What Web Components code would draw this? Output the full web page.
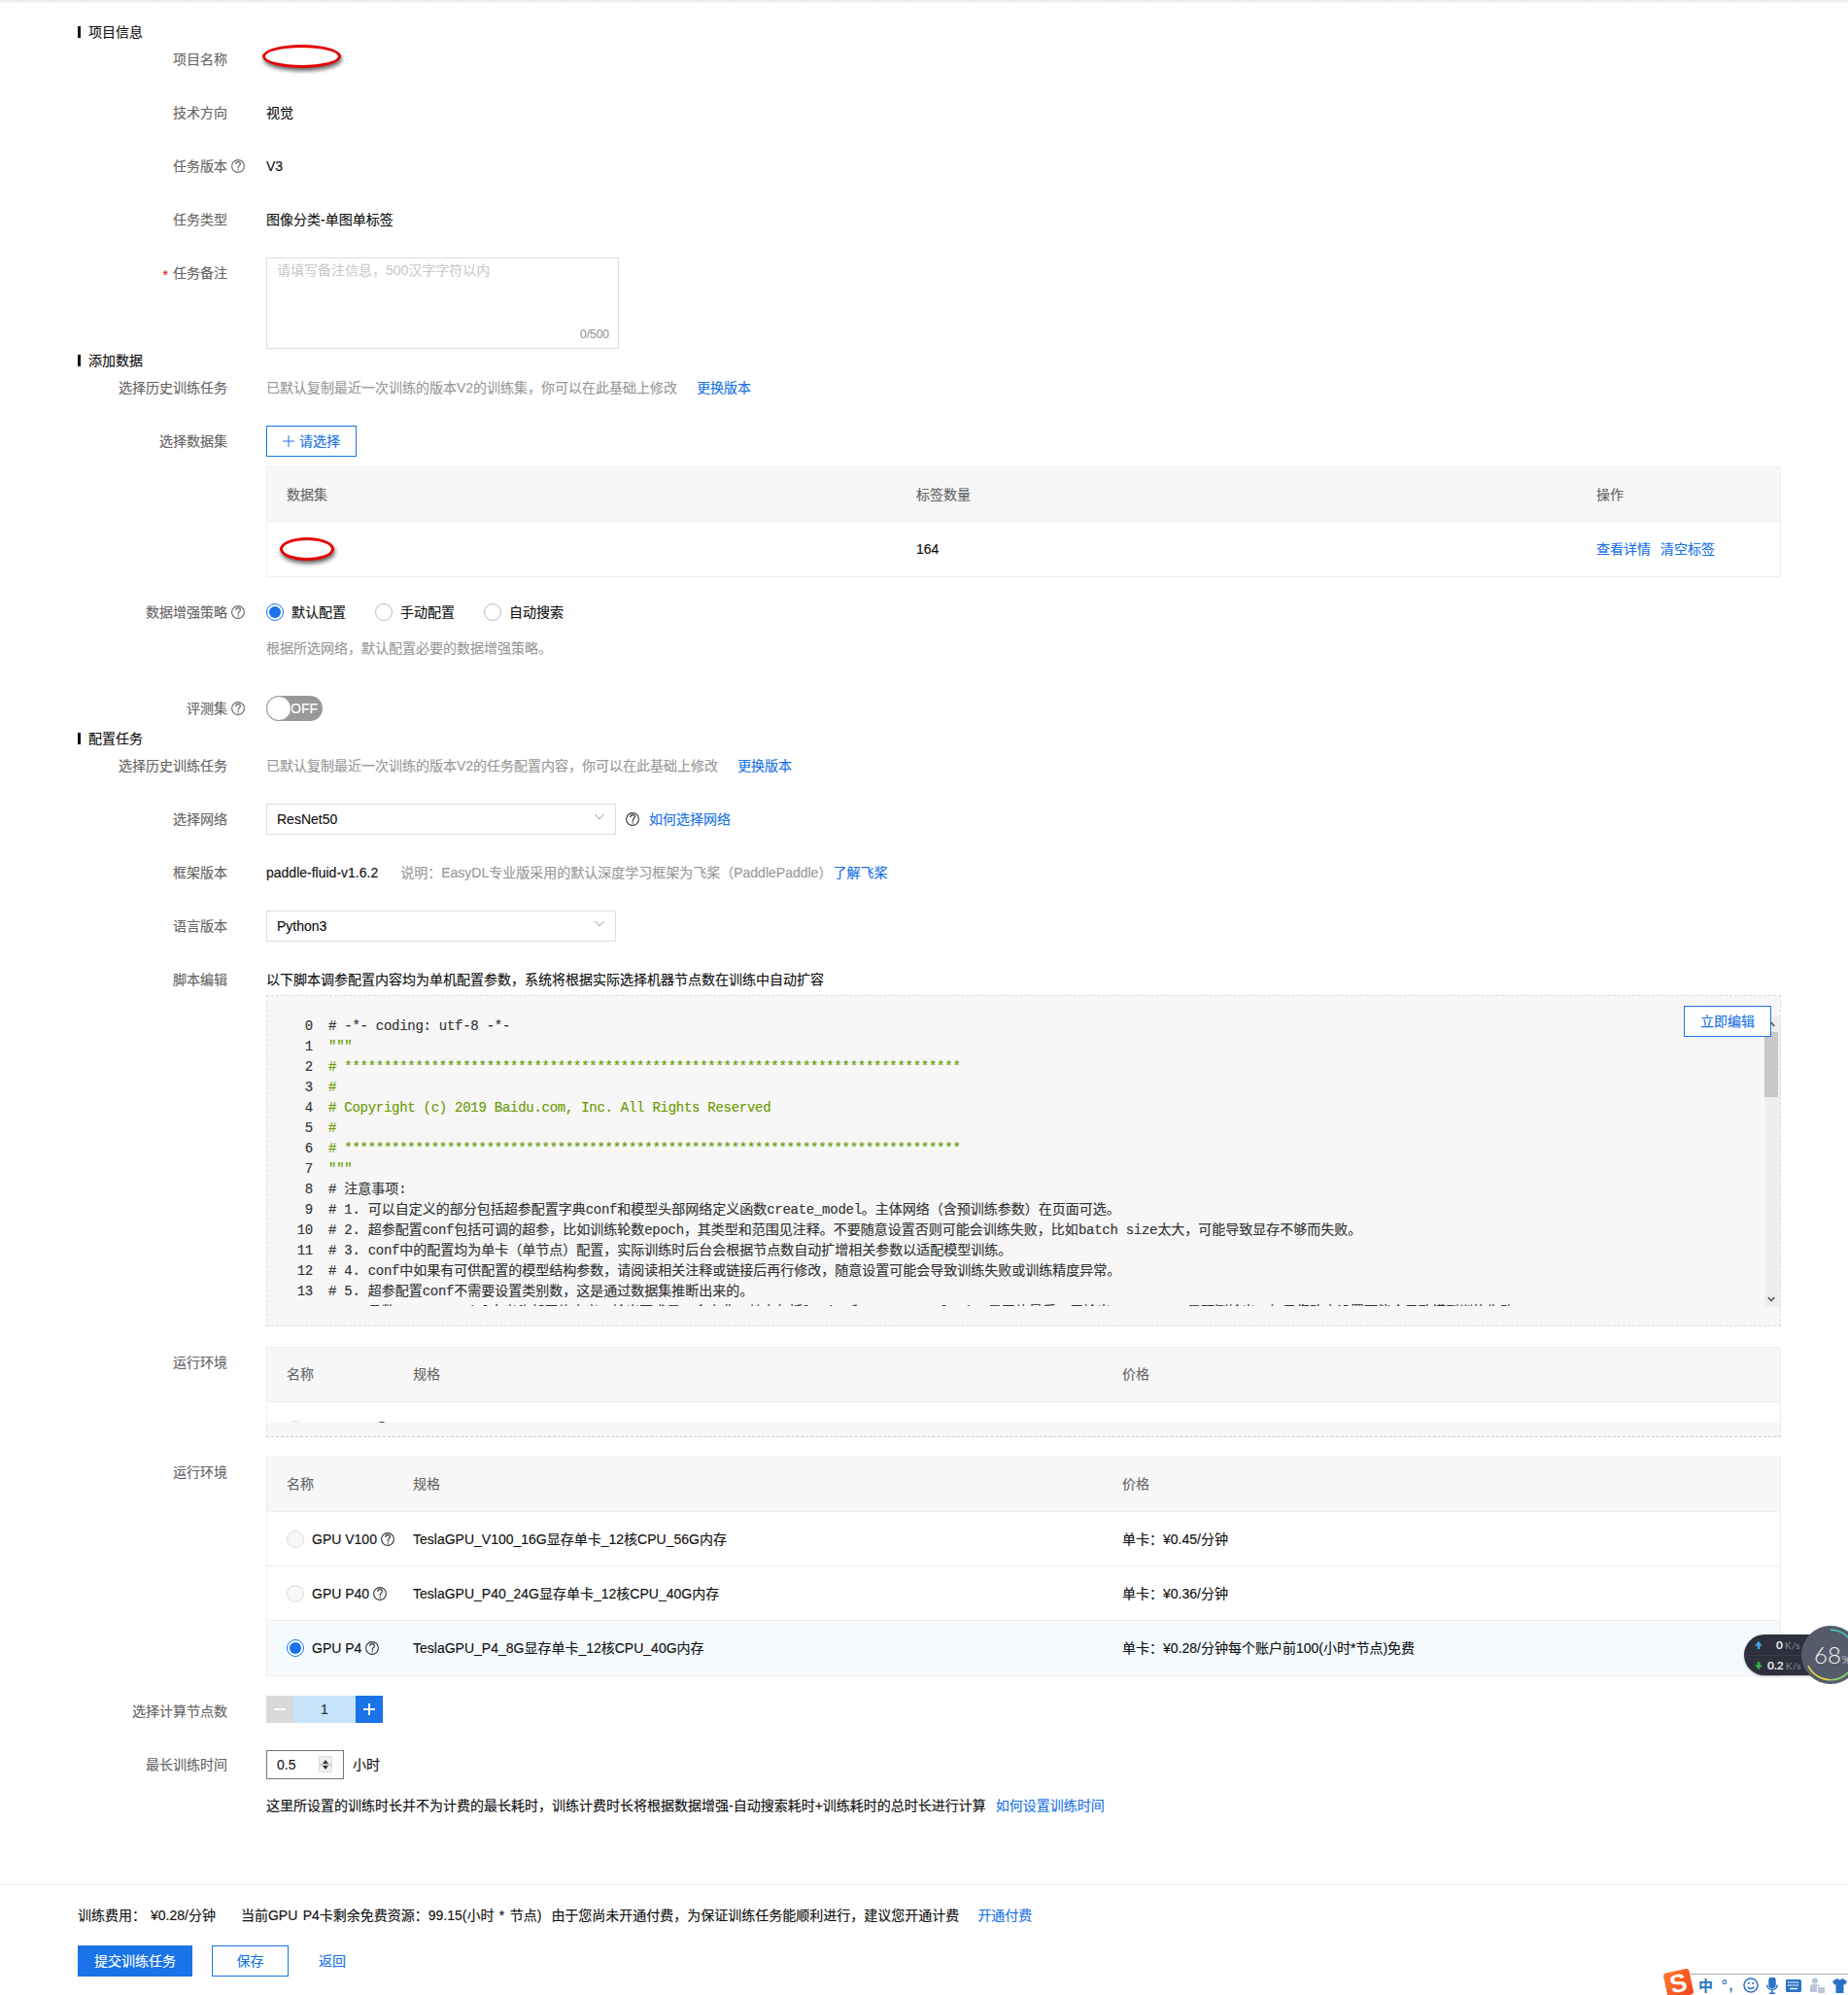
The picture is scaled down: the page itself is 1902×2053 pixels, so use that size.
<!DOCTYPE html>
<html lang="zh">
<head>
<meta charset="utf-8">
<title>配置任务</title>
<style>
html,body{margin:0;padding:0;background:#fff;overflow:hidden}
body{font:14px/32px "Liberation Sans","Noto Sans CJK SC",sans-serif;color:#222;-webkit-text-stroke:.15px}
a{color:#1a73e8;text-decoration:none}
.muted{color:#999}
.lnk{color:#1a73e8}
</style>
</head>
<body>
<x-page>
  <x-section>项目信息</x-section>
  <x-row label="项目名称"><x-blot w="81" style="margin:1px 0 0 -4px"></x-blot></x-row>
  <x-row label="技术方向">视觉</x-row>
  <x-row label="任务版本" help>V3</x-row>
  <x-row label="任务类型">图像分类-单图单标签</x-row>
  <x-row label="任务备注" required style="margin-bottom:2px"><x-textarea placeholder="请填写备注信息，500汉字字符以内" count="0/500"></x-textarea></x-row>

  <x-section>添加数据</x-section>
  <x-row label="选择历史训练任务"><span class="muted">已默认复制最近一次训练的版本V2的训练集，你可以在此基础上修改</span><span class="lnk" style="margin-left:20px">更换版本</span></x-row>
  <x-row label="选择数据集" style="margin-bottom:10px"><x-button outline plus w="93">请选择</x-button></x-row>
  <x-row style="margin-bottom:20px">
    <x-table style="--cols:648px 700px 1fr">
      <x-tr head><span>数据集</span><span>标签数量</span><span>操作</span></x-tr>
      <x-tr last><span><x-blot w="56" style="margin-left:-7px"></x-blot></span><span>164</span><span><span class="lnk">查看详情</span><span class="lnk" style="margin-left:10px">清空标签</span></span></x-tr>
    </x-table>
  </x-row>
  <x-row label="数据增强策略" help style="margin-bottom:5px">
    <x-radio checked style="margin-right:30px">默认配置</x-radio><x-radio style="margin-right:30px">手动配置</x-radio><x-radio>自动搜索</x-radio>
  </x-row>
  <x-row style="margin-bottom:30px"><span class="muted">根据所选网络，默认配置必要的数据增强策略。</span></x-row>
  <x-row label="评测集" help style="margin-bottom:5px"><x-toggle></x-toggle></x-row>

  <x-section>配置任务</x-section>
  <x-row label="选择历史训练任务"><span class="muted">已默认复制最近一次训练的版本V2的任务配置内容，你可以在此基础上修改</span><span class="lnk" style="margin-left:20px">更换版本</span></x-row>
  <x-row label="选择网络"><x-select>ResNet50</x-select><x-help style="margin:0 10px;color:#333"></x-help><span class="lnk">如何选择网络</span></x-row>
  <x-row label="框架版本">paddle-fluid-v1.6.2<span class="muted" style="margin-left:23px">说明：EasyDL专业版采用的默认深度学习框架为飞桨（PaddlePaddle）</span><span class="lnk" style="margin-left:1px">了解飞桨</span></x-row>
  <x-row label="语言版本"><x-select>Python3</x-select></x-row>
  <x-row label="脚本编辑" style="margin-bottom:21px">以下脚本调参配置内容均为单机配置参数，系统将根据实际选择机器节点数在训练中自动扩容<x-code></x-code></x-row>

  <x-row label="运行环境" style="margin-bottom:20px">
    <x-clip>
      <x-table style="--cols:130px 730px 1fr">
        <x-tr head style="padding-bottom:2px"><span>名称</span><span>规格</span><span>价格</span></x-tr>
        <x-tr><span><x-radio disabled><x-help style="margin:-2px 0 0 65px;color:#333"></x-help></x-radio></span></x-tr>
      </x-table>
    </x-clip>
  </x-row>
  <x-row label="运行环境" style="margin-bottom:20px">
    <x-table style="--cols:130px 730px 1fr">
      <x-tr head style="padding-bottom:2px"><span>名称</span><span>规格</span><span>价格</span></x-tr>
      <x-tr><span><x-radio disabled>GPU V100<x-help style="margin-left:4px;color:#333"></x-help></x-radio></span><span>TeslaGPU_V100_16G显存单卡_12核CPU_56G内存</span><span>单卡：¥0.45/分钟</span></x-tr>
      <x-tr><span><x-radio disabled>GPU P40<x-help style="margin-left:4px;color:#333"></x-help></x-radio></span><span>TeslaGPU_P40_24G显存单卡_12核CPU_40G内存</span><span>单卡：¥0.36/分钟</span></x-tr>
      <x-tr last active><span><x-radio checked>GPU P4<x-help style="margin-left:4px;color:#333"></x-help></x-radio></span><span>TeslaGPU_P4_8G显存单卡_12核CPU_40G内存</span><span>单卡：¥0.28/分钟每个账户前100(小时*节点)免费</span></x-tr>
    </x-table>
  </x-row>
  <x-row label="选择计算节点数" style="margin-bottom:23px"><x-stepper></x-stepper></x-row>
  <x-row label="最长训练时间" style="margin-bottom:10px"><x-number>0.5</x-number><span style="margin-left:9px">小时</span></x-row>
  <x-row style="margin-bottom:65px">这里所设置的训练时长并不为计费的最长耗时，训练计费时长将根据数据增强-自动搜索耗时+训练耗时的总时长进行计算<span class="lnk" style="margin-left:10px">如何设置训练时间</span></x-row>

  <x-footer>
    <span>训练费用：<span style="margin-left:5px">¥0.28/分钟</span></span><span style="margin-left:26px;word-spacing:1.5px">当前GPU P4卡剩余免费资源：99.15(小时 * 节点)</span><span style="margin-left:10px">由于您尚未开通付费，为保证训练任务能顺利进行，建议您开通计费</span><span class="lnk" style="margin-left:19px">开通付费</span>
    <div slot="actions" style="display:flex;align-items:center">
      <x-button primary w="118">提交训练任务</x-button>
      <x-button outline w="79" style="margin-left:20px">保存</x-button>
      <span class="lnk" style="margin-left:31px">返回</span>
    </div>
  </x-footer>

  <x-speed></x-speed>
  <x-ime></x-ime>
</x-page>

<script>
function def(name, css, html, init){
  customElements.define(name, class extends HTMLElement{
    constructor(){
      super();
      const r=this.attachShadow({mode:'open'});
      const t=document.createElement('template');
      t.innerHTML='<style>'+css+'</style>'+(typeof html==='function'?html(this):html);
      r.appendChild(t.content.cloneNode(true));
    }
    connectedCallback(){ if(init) init(this,this.shadowRoot); }
  });
}
const helpSvg='<svg viewBox="0 0 14 14" width="14" height="14" fill="none" stroke="currentColor"><circle cx="7" cy="7" r="6.4" stroke-width="1.1"/><path d="M4.7 4.9C4.8 3.3 5.8 2.6 7.1 2.6c1.3 0 2.3.9 2.3 2 0 1.4-1.4 1.7-1.9 2.9-.2.6-.3 1.2-.3 1.9" stroke-width="1.2"/><path d="M7.2 10.3v1.2" stroke-width="1.2"/></svg>';

def('x-help',':host{display:inline-flex;vertical-align:-2px;width:14px;height:14px;color:#666}svg{display:block}',helpSvg);

def('x-page',`:host{display:block;position:relative;box-sizing:border-box;width:1902px;height:2053px;overflow:hidden;padding:23px 69px 0 80px}
 .strip{position:absolute;left:0;right:0;top:0;height:4px;background:linear-gradient(#e8e8e8,#fff)}`,
 '<div class="strip"></div><slot></slot>');

def('x-section',`:host{display:block;height:20px;line-height:20px;margin-bottom:2px;color:#111;display:flex;align-items:center}
 i{display:block;width:3px;height:12px;background:#111;margin-right:8px}`,'<i></i><slot></slot>');

def('x-row',`:host{display:grid;grid-template-columns:154px 40px 1fr;margin-bottom:23px;line-height:32px}
 .l{color:#666;text-align:right;white-space:nowrap}
 .s{color:#e02020;margin-right:5px;font-size:14px;vertical-align:-2px}
 .h{padding-left:4px}
 .v{min-width:0;color:#111;white-space:nowrap;display:block}`,
 h=>`<div class="l">${h.hasAttribute('required')?'<span class="s">*</span>':''}${h.getAttribute('label')||''}</div><div class="h">${h.hasAttribute('help')?'<x-help></x-help>':''}</div><div class="v"><slot></slot></div>`);

def('x-blot',`:host{display:inline-block;vertical-align:top;box-sizing:border-box;height:24px;border:3.5px solid #e60000;border-radius:50%;background:#fff;box-shadow:1px 3px 4px rgba(0,0,0,.6)}`,'',
 h=>{h.style.width=h.getAttribute('w')+'px'});

def('x-textarea',`:host{display:block;position:relative;box-sizing:border-box;width:363px;height:94px;border:1px solid #ddd;background:#fff}
 .p{position:absolute;left:10px;top:2px;line-height:20px;color:#ccc}
 .c{position:absolute;right:9px;bottom:6px;line-height:16px;font-size:12px;color:#999}`,
 h=>`<div class="p">${h.getAttribute('placeholder')}</div><div class="c">${h.getAttribute('count')}</div>`);

def('x-button',`:host{display:inline-flex;vertical-align:top;box-sizing:border-box;height:32px;align-items:center;justify-content:center;line-height:30px;border:1px solid #1a73e8;color:#1a73e8;background:#fff}
 :host([primary]){background:#1a73e8;color:#fff}
 svg{display:block;margin-right:5px}`,
 h=>`${h.hasAttribute('plus')?'<svg width="12" height="12" viewBox="0 0 12 12" stroke="#1a73e8" fill="none"><path d="M6 0v12M0 6h12"/></svg>':''}<slot></slot>`,
 h=>{h.style.width=h.getAttribute('w')+'px'});

def('x-table',`:host{display:block;border:1px solid #eee;background:#fff}`,'<slot></slot>');

def('x-tr',`:host{display:grid;grid-template-columns:var(--cols);height:56px;box-sizing:border-box;align-items:center;border-bottom:1px solid #eee;color:#111;line-height:20px}
 :host([head]){background:#f7f7f7;color:#666}
 :host([active]){background:#f5faff}
 :host([last]){border-bottom:0}
 ::slotted(*){padding-left:20px;white-space:nowrap}`,'<slot></slot>');

def('x-clip',`:host{display:block;position:relative;box-sizing:border-box;height:93px;background:#f7f7f7;border-bottom:1px dashed #ccc;border-left:1px dashed #ddd;border-right:1px dashed #ddd}
 .in{height:78px;overflow:hidden;margin:0 -1px}`,'<div class="in"><slot></slot></div>');

def('x-radio',`:host{display:inline-flex;align-items:center;vertical-align:top;line-height:32px;height:32px}
 .o{box-sizing:border-box;width:18px;height:18px;border-radius:50%;border:1px solid #bbb;background:#fff;margin-right:8px;display:flex;align-items:center;justify-content:center;flex:none}
 :host([disabled]) .o{border-color:#ddd;background:#f7f7f7}
 :host([checked]) .o{border-color:#1a73e8}
 :host([checked]) .o::after{content:"";width:12px;height:12px;border-radius:50%;background:#1a73e8}`,
 '<span class="o"></span><slot></slot>');

def('x-toggle',`:host{display:inline-block;vertical-align:top;position:relative;margin-top:3px;width:58px;height:26px;border-radius:13px;background:#999;color:#fff;line-height:26px}
 .k{position:absolute;left:0;top:0;box-sizing:border-box;width:26px;height:26px;border-radius:50%;background:#fff;border:1px solid #999}
 .t{position:absolute;left:25px;top:0}`,'<span class="t">OFF</span><span class="k"></span>');

def('x-select',`:host{display:inline-flex;vertical-align:top;align-items:center;justify-content:space-between;box-sizing:border-box;width:360px;height:32px;border:1px solid #ddd;padding:0 11px 0 10px;line-height:30px;color:#111}
 svg{display:block;margin-top:-6px}`,
 '<slot></slot><svg width="10" height="7" viewBox="0 0 10 7" fill="none" stroke="#999"><path d="M.5.8 5 6 9.5.8"/></svg>');

def('x-code',`:host{display:block;position:relative;box-sizing:border-box;height:341px;margin-top:0;background:#f7f7f7;border:1px dashed #ddd;padding-top:21px;white-space:normal}
 .view{height:298px;overflow:hidden;font:14px/21px "Liberation Mono","Noto Sans CJK SC",monospace;color:#333}
 .ln{display:flex;height:21px;white-space:pre}
 .n{width:47px;text-align:right;margin-right:16px;flex:none;letter-spacing:-.27px;color:#333}
 .m{letter-spacing:-.27px}
 .g{color:#6a9a00}
 .btn{position:absolute;right:9px;top:10px;width:90px;height:32px;box-sizing:border-box;border:1px solid #1a73e8;background:#fff;color:#1a73e8;font:14px/30px "Liberation Sans","Noto Sans CJK SC",sans-serif;text-align:center}
 .bar{position:absolute;right:0;top:21px;width:16px;height:299px;background:#eee}
 .th{position:absolute;left:0;top:16px;width:14px;height:67px;background:#c8c8c8}
 .bar svg{position:absolute;left:3px}`,
 ()=>{
  const stars='*'.repeat(78);
  const L=[
   ['# -*- coding: utf-8 -*-'],['"""',1],['# '+stars,1],['#',1],['# Copyright (c) 2019 Baidu.com, Inc. All Rights Reserved',1],['#',1],['# '+stars,1],['"""',1],
   ['# 注意事项:'],
   ['# 1. 可以自定义的部分包括超参配置字典conf和模型头部网络定义函数create_model。主体网络（含预训练参数）在页面可选。'],
   ['# 2. 超参配置conf包括可调的超参，比如训练轮数epoch，其类型和范围见注释。不要随意设置否则可能会训练失败，比如batch size太大，可能导致显存不够而失败。'],
   ['# 3. conf中的配置均为单卡（单节点）配置，实际训练时后台会根据节点数自动扩增相关参数以适配模型训练。'],
   ['# 4. conf中如果有可供配置的模型结构参数，请阅读相关注释或链接后再行修改，随意设置可能会导致训练失败或训练精度异常。'],
   ['# 5. 超参配置conf不需要设置类别数，这是通过数据集推断出来的。'],
   ['     函数create_model定义头部网络定义，输出要求是一个字典，其中包括logits和top1_acc，logits是网络最后一层输出，top1_acc是预测输出。如果您改变设置可能会导致模型训练失败。']
  ];
  const esc=s=>s.replace(/&/g,'&amp;').replace(/</g,'&lt;');
  const wrap=s=>s.split(/([\x00-\x7f]+)/).map((p,i)=>i%2?`<span class="m">${esc(p)}</span>`:p).join('');
  const rows=L.map((l,i)=>`<div class="ln"><span class="n">${i<14?i:''}</span><span class="${l[1]?'g':''}">${wrap(l[0])}</span></div>`).join('');
  return `<div class="view">${rows}</div>
  <div class="bar"><div class="th"></div>
   <svg style="top:5px" width="8" height="6" viewBox="0 0 8 6" fill="none" stroke="#555" stroke-width="1.6"><path d="M.8 5 4 1.4 7.2 5"/></svg>
   <svg style="bottom:5px" width="8" height="6" viewBox="0 0 8 6" fill="none" stroke="#555" stroke-width="1.6"><path d="M.8 1 4 4.6 7.2 1"/></svg>
  </div>
  <div class="btn">立即编辑</div>`;
 });

def('x-stepper',`:host{display:inline-flex;vertical-align:top;height:28px;line-height:28px;color:#333}
 div{text-align:center}
 .a{width:28px;background:#d9d9d9;color:#fff;font-size:20px}
 .b{width:64px;background:#c6e3fa}
 .c{width:28px;background:#1a73e8;color:#fff;font-size:20px}
 svg{display:block;margin:8px}`,
 `<div class="a"><svg width="12" height="12" viewBox="0 0 12 12" stroke="#fff" stroke-width="2"><path d="M0 6h12"/></svg></div><div class="b">1</div><div class="c"><svg width="12" height="12" viewBox="0 0 12 12" stroke="#fff" stroke-width="2"><path d="M0 6h12M6 0v12"/></svg></div>`);

def('x-number',`:host{display:inline-flex;vertical-align:top;box-sizing:border-box;width:80px;height:30px;margin-top:1px;border:1px solid #767676;padding-left:10px;line-height:28px;position:relative;color:#222}
 .sp{position:absolute;left:53px;top:5px;width:14px;height:17px;background:#f0f0f0;border:1px solid #ddd;box-sizing:border-box}
 .sp i{position:absolute;left:3px;width:0;height:0;border-left:3px solid transparent;border-right:3px solid transparent}
 .u{top:3px;border-bottom:4px solid #333}.d{bottom:2px;border-top:4px solid #333}
 .sp b{position:absolute;left:0;right:0;top:7px;height:2px;background:#ccc}`,
 '<slot></slot><div class="sp"><i class="u"></i><b></b><i class="d"></i></div>');

def('x-footer',`:host{display:block;position:absolute;left:0;right:0;top:1939px;padding:15px 80px 0;border-top:1px solid #eee;line-height:32px;color:#111;white-space:nowrap}
 .act{margin-top:15px}`,'<div><slot></slot></div><div class="act"><slot name="actions"></slot></div>');

def('x-speed',`:host{display:block;position:absolute;left:1795px;top:1673px;width:107px;height:60px;font-family:Lato,"Liberation Sans",sans-serif;line-height:normal;-webkit-text-stroke:0}
 .pill{position:absolute;left:0;top:9px;width:90px;height:42px;border-radius:21px;background:#2e313d;box-shadow:0 1px 2px rgba(0,0,0,.3)}
 .r{position:absolute;left:0;width:64px;height:21px;display:flex;align-items:center;justify-content:flex-start;color:#e8e8e8;font-size:12px;font-weight:700}
 .r small{font-size:10px;font-weight:400;color:#8b8f9c;margin-left:2px;letter-spacing:.3px}
 .r svg{position:absolute;left:11px;top:7px}
 .g{position:absolute;left:59px;top:0;width:60px;height:60px;border-radius:50%;background:#565b6b}
 .g svg{position:absolute;left:0;top:0}
 .p{position:absolute;left:13px;top:15px;color:#f2f2f2;font-size:24px;font-weight:300;white-space:nowrap}
 .p small{font-size:12px;margin-left:1px}`,
 `<div class="pill">
   <div class="r" style="top:0;border-bottom:1px solid #3a3d4a"><svg width="8" height="8" viewBox="0 0 9 9" fill="#3fa7e8"><path d="M4.5 0 9 5H6v4H3V5H0z"/></svg><span style="margin-left:33px">0</span><small>K/s</small></div>
   <div class="r" style="top:21px"><svg width="8" height="8" viewBox="0 0 9 9" fill="#2fb344"><path d="M4.5 9 0 4h3V0h3v4h3z"/></svg><span style="margin-left:24px">0.2</span><small>K/s</small></div>
  </div>
  <div class="g"><div class="p">68<small>%</small></div>
   <svg width="60" height="60" viewBox="0 0 60 60" fill="none" stroke-width="1.6"><path d="M30 4.3A25.7 25.7 0 0 1 52 17" stroke="#3dd6c0"/><path d="M7 41.3A25.7 25.7 0 0 0 30 55.7" stroke="#e6d84a"/><path d="M30 55.7A25.7 25.7 0 0 0 50 46" stroke="#8ccf6a"/></svg></div>`);

def('x-ime',`:host{display:block;position:absolute;right:0;bottom:0;width:188px;height:25px;color:#2a72c5;-webkit-text-stroke:0}
 .line{position:absolute;left:26px;right:0;top:3px;height:1px;background:#aaa}
 .bar{position:absolute;left:34px;top:7px;height:16px;display:flex;align-items:center;gap:8px}
 .bar>*{flex:none}
 .zh{font:700 15px/16px "Noto Sans CJK SC",sans-serif;width:15px;margin-right:1px}
 .pu{font:700 14px/16px "Liberation Sans",sans-serif;width:14px;margin-right:0;letter-spacing:2px}
 .s{position:absolute;left:0;top:0;width:27px;height:27px;border-radius:3px;transform:rotate(-12deg);background:linear-gradient(135deg,#ff7a2e,#f0421c);color:#fff;font:700 26px/27px "Liberation Sans",sans-serif;text-align:center}`,
 `<div class="line"></div><div class="s">S</div>
 <div class="bar"><span class="zh">中</span><span class="pu">°,</span>
 <svg width="16" height="16" viewBox="0 0 16 16" fill="none" stroke="#2a72c5" stroke-width="1.5"><circle cx="8" cy="8" r="7"/><path d="M4.8 9.6C6 12 10 12 11.2 9.6"/><path d="M5.8 4.8v2.2M10.2 4.8v2.2"/></svg>
 <svg width="12" height="17" viewBox="0 0 12 17" fill="none" stroke="#2a72c5" stroke-width="1.5"><rect x="3" y="0" width="6" height="10.5" rx="3" fill="#2a72c5"/><path d="M.8 7.5c0 6.6 10.4 6.6 10.4 0M6 12.5V16M3 16.2h6"/></svg>
 <svg width="16" height="13" viewBox="0 0 16 13"><rect width="16" height="13" rx="1.5" fill="#2a72c5"/><path d="M2 3h12M2 6h12" stroke="#fff" stroke-width="1.3" stroke-dasharray="1.4 1"/><path d="M4 9.5h8" stroke="#fff" stroke-width="1.4"/></svg>
 <svg width="16" height="16" viewBox="0 0 16 16" fill="#b9c6d9"><circle cx="6" cy="3.5" r="3"/><path d="M1 15V10c0-2 1.5-3 3-3h4c1.5 0 2.5 1 3 2H8v6z"/><rect x="9" y="10" width="7" height="6"/></svg>
 <svg width="15" height="15" viewBox="0 0 15 15" fill="#2a72c5"><path d="M4.5 0 7.5 1.5 10.5 0 15 3 13 6.5 11.5 6V15H3.5V6L2 6.5 0 3z"/></svg>
 </div>`);
</script>
</body>
</html>
